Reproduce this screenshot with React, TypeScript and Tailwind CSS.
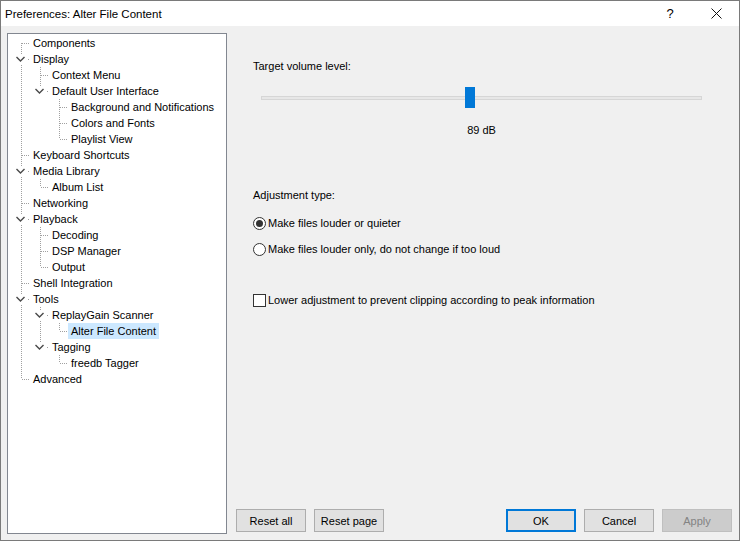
import React from "react";

type Node = { label: string; level: number; expandable?: boolean; selected?: boolean };

const TREE: Node[] = [
  { label: "Components", level: 0 },
  { label: "Display", level: 0, expandable: true },
  { label: "Context Menu", level: 1 },
  { label: "Default User Interface", level: 1, expandable: true },
  { label: "Background and Notifications", level: 2 },
  { label: "Colors and Fonts", level: 2 },
  { label: "Playlist View", level: 2 },
  { label: "Keyboard Shortcuts", level: 0 },
  { label: "Media Library", level: 0, expandable: true },
  { label: "Album List", level: 1 },
  { label: "Networking", level: 0 },
  { label: "Playback", level: 0, expandable: true },
  { label: "Decoding", level: 1 },
  { label: "DSP Manager", level: 1 },
  { label: "Output", level: 1 },
  { label: "Shell Integration", level: 0 },
  { label: "Tools", level: 0, expandable: true },
  { label: "ReplayGain Scanner", level: 1, expandable: true },
  { label: "Alter File Content", level: 2, selected: true },
  { label: "Tagging", level: 1, expandable: true },
  { label: "freedb Tagger", level: 2 },
  { label: "Advanced", level: 0 },
];

// does a sibling at `level` follow row i (before the branch closes)?
function hasNextSibling(i: number, level: number) {
  for (let j = i + 1; j < TREE.length; j++) {
    if (TREE[j].level < level) return false;
    if (TREE[j].level === level) return true;
  }
  return false;
}

const LINE = "#a0a0a0";

function Cell({
  up,
  down,
  branch,
  chevron,
}: {
  up?: boolean;
  down?: boolean;
  branch?: boolean;
  chevron?: boolean;
}) {
  return (
    <svg width="19" height="16" className="block shrink-0" shapeRendering="crispEdges">
      {up && <line x1="10.5" y1="0" x2="10.5" y2="8" stroke={LINE} strokeDasharray="1 1" />}
      {down && <line x1="10.5" y1="8" x2="10.5" y2="16" stroke={LINE} strokeDasharray="1 1" />}
      {branch && <line x1="11" y1="8.5" x2="19" y2="8.5" stroke={LINE} strokeDasharray="1 1" />}
      {chevron && (
        <>
          <rect x="4" y="3" width="13" height="11" fill="white" />
          <polyline
            points="5.5,6 9.5,10 13.5,6"
            fill="none"
            stroke="#4a4a4a"
            strokeWidth="1.4"
            shapeRendering="geometricPrecision"
          />
        </>
      )}
    </svg>
  );
}

function TreeRow({ node, index }: { node: Node; index: number }) {
  const cells = [];
  for (let k = 0; k < node.level; k++) {
    cells.push(<Cell key={k} up={hasNextSibling(index, k)} down={hasNextSibling(index, k)} />);
  }
  cells.push(
    <Cell
      key="own"
      up={index !== 0}
      down={hasNextSibling(index, node.level)}
      branch
      chevron={node.expandable}
    />
  );
  return (
    <div className="flex h-4 items-center">
      {cells}
      <span
        className={
          "px-[3px] leading-4 whitespace-nowrap " + (node.selected ? "bg-[#cce8ff]" : "")
        }
      >
        {node.label}
      </span>
    </div>
  );
}

function Button({
  children,
  primary,
  disabled,
}: {
  children: React.ReactNode;
  primary?: boolean;
  disabled?: boolean;
}) {
  return (
    <button
      type="button"
      className={
        "flex h-[23px] w-[70px] items-center justify-center text-[11px] " +
        (primary
          ? "border-2 border-[#0078d7] bg-[#e1e1e1] text-black"
          : disabled
          ? "border border-[#bfbfbf] bg-[#cccccc] text-[#838383]"
          : "border border-[#adadad] bg-[#e1e1e1] text-black")
      }
    >
      {children}
    </button>
  );
}

function Radio({ checked, label }: { checked?: boolean; label: string }) {
  return (
    <div className="flex h-4 items-center">
      <span className="flex h-[13px] w-[13px] items-center justify-center rounded-full border border-[#333333] bg-white">
        {checked && <span className="h-[7px] w-[7px] rounded-full bg-[#333333]" />}
      </span>
      <span className="ml-[2px]">{label}</span>
    </div>
  );
}

export default function App() {
  return (
    <div
      className="flex h-[541px] w-[740px] flex-col border border-[#7a7a7a] bg-[#f0f0f0] text-[11px] leading-4 text-black"
      style={{ fontFamily: '"Liberation Sans", Arial, sans-serif' }}
    >
      {/* title bar */}
      <div className="flex h-[25px] shrink-0 items-center bg-white">
        <span className="pl-[4px] pt-[1px] text-[11.5px]">Preferences: Alter File Content</span>
        <span className="ml-auto w-[46px] text-center text-[13px]">?</span>
        <span className="flex w-[46px] items-center justify-center">
          <svg width="11" height="11" viewBox="0 0 11 11">
            <path d="M0.5 0.5 L10.5 10.5 M10.5 0.5 L0.5 10.5" stroke="#111" strokeWidth="1" />
          </svg>
        </span>
      </div>

      <div className="flex min-h-0 flex-1">
        {/* tree */}
        <div className="ml-[6px] mt-[7px] h-[501px] w-[220px] shrink-0 border border-[#828790] bg-white pt-[1px]">
          <div className="pl-[3px]">
            {TREE.map((n, i) => (
              <TreeRow key={n.label} node={n} index={i} />
            ))}
          </div>
        </div>

        {/* page */}
        <div className="flex min-w-0 flex-1 flex-col">
          <div className="pl-[26px] pt-[32px]">
            <div>Target volume level:</div>

            <div className="relative ml-[8px] mt-[13px] h-[21px] w-[441px]">
              <div className="absolute left-0 right-0 top-[9px] h-[4px] border border-[#d6d6d6] bg-[#e7e7e7]" />
              <div className="absolute left-[204px] top-0 h-[21px] w-[10px] bg-[#0078d7]" />
            </div>
            <div className="ml-[8px] mt-[14px] w-[441px] text-center">89 dB</div>

            <div className="mt-[49px]">Adjustment type:</div>
            <div className="mt-[12px]">
              <Radio checked label="Make files louder or quieter" />
            </div>
            <div className="mt-[10px]">
              <Radio label="Make files louder only, do not change if too loud" />
            </div>

            <div className="mt-[35px] flex h-4 items-center">
              <span className="h-[13px] w-[13px] border border-[#333333] bg-white" />
              <span className="ml-[2px]">Lower adjustment to prevent clipping according to peak information</span>
            </div>
          </div>

          <div className="mt-auto flex pb-[8px] pl-[9px] pr-[7px]">
            <div className="flex gap-[8px]">
              <Button>Reset all</Button>
              <Button>Reset page</Button>
            </div>
            <div className="ml-auto flex gap-[8px]">
              <Button primary>OK</Button>
              <Button>Cancel</Button>
              <Button disabled>Apply</Button>
            </div>
          </div>
        </div>
      </div>
    </div>
  );
}
